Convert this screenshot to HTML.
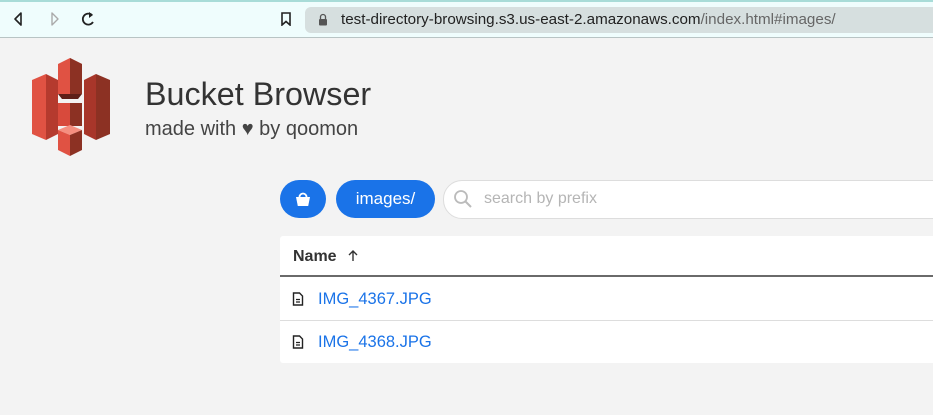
<!DOCTYPE html><html><head><style>
body{margin:0;width:933px;height:415px;overflow:hidden;background:#f3f3f3;font-family:"Liberation Sans",sans-serif;position:relative}
.abs{position:absolute}
</style></head><body>
<div class="abs" style="left:0;top:0;width:933px;height:37px;background:#effdfd;border-bottom:1px solid #b8c4c4"></div>
<div class="abs" style="left:0;top:0;width:933px;height:2px;background:#a8dcd8"></div>
<svg class="abs" style="left:12px;top:11px" width="90" height="16"><path d="M9 2 L3 8 L9 14 Z" fill="none" stroke="#222" stroke-width="1.6" stroke-linejoin="round"/><path d="M40 2 L46 8 L40 14 Z" fill="none" stroke="#aaa" stroke-width="1.4" stroke-linejoin="round"/><path d="M80 4 A5.5 5.5 0 1 0 81 11" fill="none" stroke="#222" stroke-width="1.8"/><path d="M77 1 L81 4 L77 7" fill="#222"/></svg>
<svg class="abs" style="left:280px;top:12px" width="12" height="14"><path d="M2 1 H10 V13 L6 9.5 L2 13 Z" fill="none" stroke="#222" stroke-width="1.6"/></svg>
<div class="abs" style="left:305px;top:7px;width:640px;height:26px;background:#d6dfdf;border-radius:6px"></div>
<svg class="abs" style="left:318px;top:13px" width="10" height="13"><path d="M2.5 6 V4 A2.5 2.5 0 0 1 7.5 4 V6" fill="none" stroke="#555" stroke-width="1.3"/><rect x="1" y="6" width="8" height="6.5" rx="1" fill="#555"/></svg>
<div class="abs" style="left:341px;top:11px;font-size:15.2px;color:#222;white-space:nowrap">test-directory-browsing.s3.us-east-2.amazonaws.com<span style="color:#666">/index.html#images/</span></div>
<svg class="abs" style="left:30px;top:58px" width="82" height="98" viewBox="0 0 82 98">
<polygon points="2,22 16,16 16,82 2,76" fill="#e05243"/><polygon points="16,16 28,22 28,76 16,82" fill="#b53a2e"/>
<polygon points="66,16 80,22 80,76 66,82" fill="#8c3123"/><polygon points="54,22 66,16 66,82 54,76" fill="#a8362a"/>
<polygon points="28,6 40,0 52,6 52,36 28,36" fill="#e05243"/><polygon points="40,0 52,6 52,36 40,36" fill="#8c3123"/>
<polygon points="28,36 52,36 48,41 32,41" fill="#5e1f18"/>
<polygon points="28,45 52,45 52,68 28,68" fill="#8c3123"/><polygon points="28,45 40,45 40,68 28,68" fill="#d84a3c"/>
<polygon points="28,72 40,67 52,72 40,77" fill="#f58e7f"/>
<polygon points="28,72 40,77 40,98 28,92" fill="#e05243"/><polygon points="40,77 52,72 52,92 40,98" fill="#8c3123"/>
</svg>
<div class="abs" style="left:145px;top:76px;font-size:32.3px;color:#333">Bucket Browser</div>
<div class="abs" style="left:145px;top:118px;font-size:20px;color:#444">made with ♥ by qoomon</div>
<div class="abs" style="left:280px;top:180px;width:46px;height:38px;border-radius:19px;background:#1a73e8"></div>
<svg class="abs" style="left:295px;top:190px" width="16" height="18"><path d="M4.5 7 A3.5 3.5 0 0 1 11.5 7" fill="none" stroke="#fff" stroke-width="1.8"/><path d="M1 7 H15 L13.2 16 H2.8 Z" fill="#fff"/></svg>
<div class="abs" style="left:336px;top:180px;width:99px;height:38px;border-radius:19px;background:#1a73e8;color:#fff;font-size:17px;text-align:center;line-height:38px">images/</div>
<div class="abs" style="left:443px;top:180px;width:520px;height:37px;border-radius:19px;background:#fff;border:1px solid #ddd"></div>
<svg class="abs" style="left:453px;top:189px" width="20" height="20"><circle cx="8" cy="8" r="6" fill="none" stroke="#bbb" stroke-width="1.8"/><path d="M12.5 12.5 L18 18" stroke="#bbb" stroke-width="2"/></svg>
<div class="abs" style="left:484px;top:190px;font-size:16px;color:#b5b5b5">search by prefix</div>
<div class="abs" style="left:280px;top:236px;width:660px;height:127px;background:#fff;border-radius:3px"></div>
<div class="abs" style="left:293px;top:248px;font-size:16px;font-weight:bold;color:#333">Name</div>
<svg class="abs" style="left:348px;top:250px" width="10" height="12"><path d="M5 11 V1 M1 5 L5 1 L9 5" fill="none" stroke="#333" stroke-width="1.4"/></svg>
<div class="abs" style="left:280px;top:275px;width:660px;height:2px;background:#6a6a6a"></div>
<div class="abs" style="left:280px;top:320px;width:660px;height:1px;background:#ddd"></div>
<svg class="abs" style="left:292px;top:292px" width="12" height="14"><path d="M1.5 1 H7.5 L10.5 4 V13 H1.5 Z" fill="none" stroke="#222" stroke-width="1.4"/><path d="M4 7.5 H8 M4 10 H8" stroke="#222" stroke-width="1.2"/></svg>
<div class="abs" style="left:318px;top:290px;font-size:16.5px;color:#1a73e8">IMG_4367.JPG</div>
<svg class="abs" style="left:292px;top:335px" width="12" height="14"><path d="M1.5 1 H7.5 L10.5 4 V13 H1.5 Z" fill="none" stroke="#222" stroke-width="1.4"/><path d="M4 7.5 H8 M4 10 H8" stroke="#222" stroke-width="1.2"/></svg>
<div class="abs" style="left:318px;top:333px;font-size:16.5px;color:#1a73e8">IMG_4368.JPG</div>
</body></html>
